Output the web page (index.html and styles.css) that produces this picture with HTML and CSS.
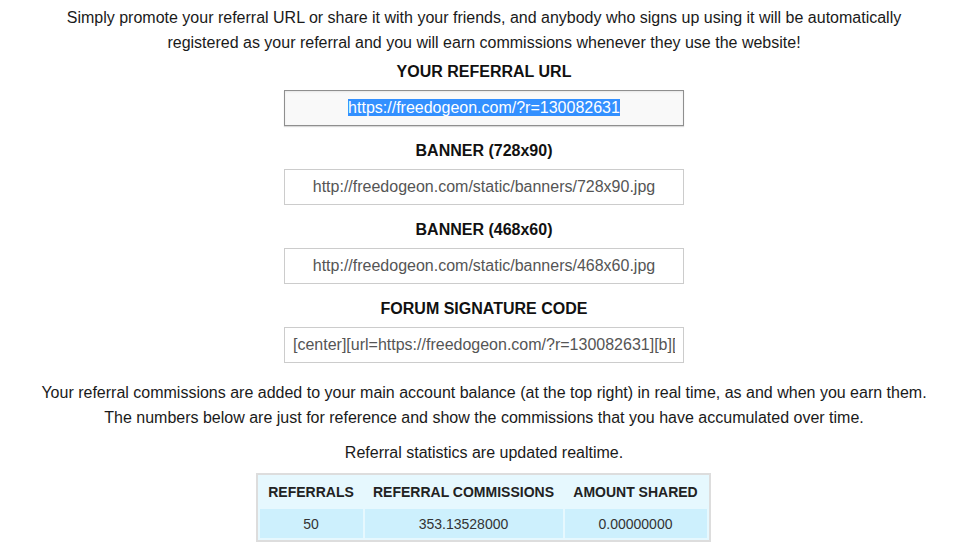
FILE: index.html
```html
<!DOCTYPE html>
<html>
<head>
<meta charset="utf-8">
<link rel="stylesheet" href="styles.css">
</head>
<body>
<div class="page">
  <p class="intro">Simply promote your referral URL or share it with your friends, and anybody who signs up using it will be automatically registered as your referral and you will earn commissions whenever they use the website!</p>

  <div class="field">
    <h3 class="label">YOUR REFERRAL URL</h3>
    <div class="box box-focus"><span class="box-text"><span class="sel">https://freedogeon.com/?r=130082631</span></span></div>
  </div>

  <div class="field">
    <h3 class="label">BANNER (728x90)</h3>
    <div class="box"><span class="box-text">http://freedogeon.com/static/banners/728x90.jpg</span></div>
  </div>

  <div class="field">
    <h3 class="label">BANNER (468x60)</h3>
    <div class="box"><span class="box-text">http://freedogeon.com/static/banners/468x60.jpg</span></div>
  </div>

  <div class="field">
    <h3 class="label">FORUM SIGNATURE CODE</h3>
    <div class="box box-left"><span class="box-text">[center][url=https://freedogeon.com/?r=130082631][b][color=#000000]FREEDOGEON[/color][/b][/url][/center]</span></div>
  </div>

  <p class="info">Your referral commissions are added to your main account balance (at the top right) in real time, as and when you earn them. The numbers below are just for reference and show the commissions that you have accumulated over time.</p>

  <p class="note">Referral statistics are updated realtime.</p>

  <table class="stats">
    <thead>
      <tr>
        <th class="c1">REFERRALS</th>
        <th class="c2">REFERRAL COMMISSIONS</th>
        <th class="c3">AMOUNT SHARED</th>
      </tr>
    </thead>
    <tbody>
      <tr>
        <td>50</td>
        <td>353.13528000</td>
        <td>0.00000000</td>
      </tr>
    </tbody>
  </table>
</div>
</body>
</html>
```

FILE: styles.css
```css
html, body {
  margin: 0;
  padding: 0;
  background: #ffffff;
}

body {
  font-family: "Liberation Sans", Arial, sans-serif;
  font-size: 16px;
  color: #1a1a1a;
}

.page {
  display: flex;
  flex-direction: column;
  align-items: center;
  padding: 5px 0 0 2px;
  text-align: center;
}

.intro {
  margin: 0;
  width: 870px;
  line-height: 25px;
}

.field {
  display: flex;
  flex-direction: column;
  align-items: center;
  margin-top: 4px;
}

.field + .field {
  margin-top: 12px;
}

.label {
  margin: 0 0 6px;
  font-size: 16px;
  font-weight: bold;
  line-height: 25px;
  color: #111;
}

.box {
  box-sizing: border-box;
  width: 400px;
  height: 36px;
  border: 1px solid #cccccc;
  background: #ffffff;
  color: #555555;
  font-size: 16px;
  line-height: 34px;
  padding: 0 8px;
  text-align: center;
}

.box-text {
  display: block;
  white-space: nowrap;
  overflow: hidden;
}

.box-focus {
  border-color: #8f8f8f;
  background: #f9f9f9;
  box-shadow: inset 0 1px 2px rgba(0, 0, 0, 0.08), 0 1px 1px rgba(0, 0, 0, 0.15);
}

.sel {
  background: #3390ff;
  color: #ffffff;
}

.box-left {
  text-align: left;
}

.info {
  margin: 17px 0 0;
  width: 892px;
  line-height: 25px;
}

.note {
  margin: 10px 0 0;
  line-height: 25px;
}

.stats {
  margin: 8px 2px 0 0;
  border: 2px solid #dddddd;
  border-spacing: 2px;
  background: #e6f8fe;
  font-size: 14px;
  color: #333333;
  table-layout: fixed;
}

.stats th {
  font-weight: bold;
  font-size: 14px;
  padding: 0;
  height: 30px;
  white-space: nowrap;
  box-sizing: border-box;
  color: #222222;
}

.stats td {
  background: #cdf0fd;
  height: 29px;
  padding: 0;
  white-space: nowrap;
  box-sizing: border-box;
}

.stats .c1 {
  width: 103px;
}

.stats .c2 {
  width: 198px;
}

.stats .c3 {
  width: 142px;
}
```
